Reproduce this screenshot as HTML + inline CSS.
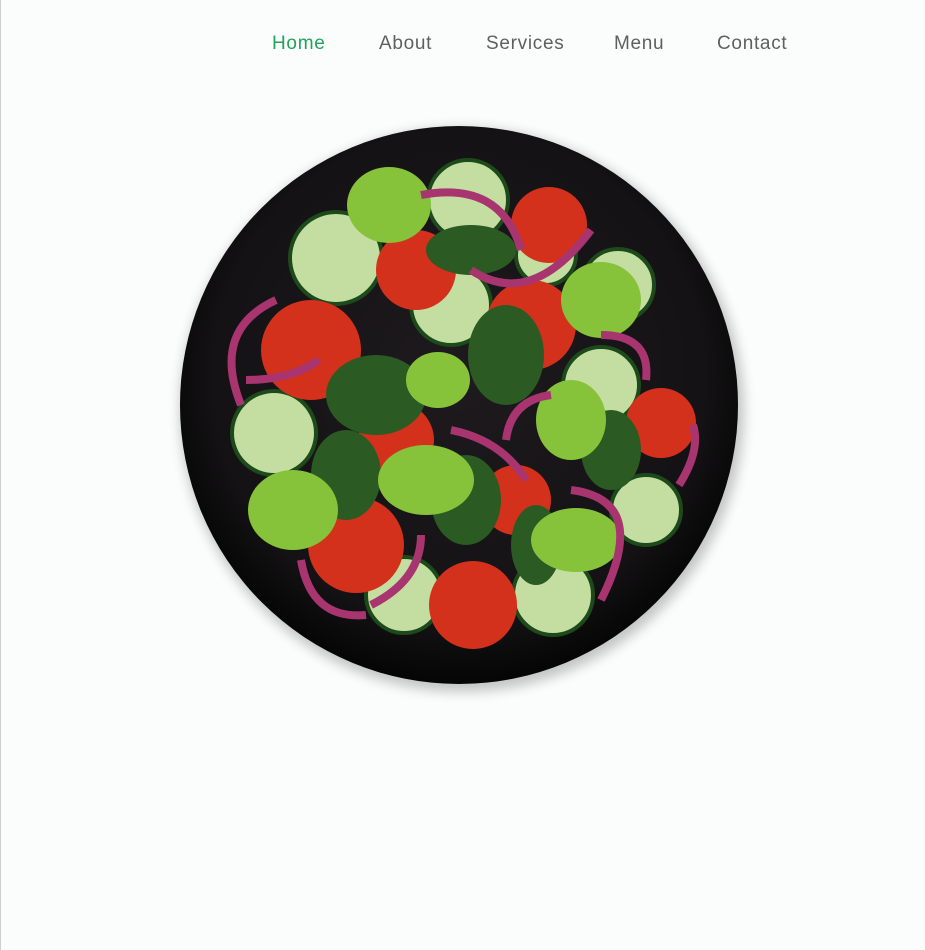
<!DOCTYPE html>
<html><head><meta charset="utf-8"><style>
html,body{margin:0;padding:0}
body{width:925px;height:950px;background:#fbfdfd;border-left:1px solid #cfcfcf;box-sizing:border-box;position:relative;overflow:hidden;font-family:"Liberation Sans",sans-serif}
nav a{position:absolute;top:33px;font-size:19px;letter-spacing:0.7px;color:#5f5f5f;text-decoration:none}
svg{position:absolute;left:0;top:0}
</style></head><body>
<nav>
<a style="left:271px;color:#1fa35a">Home</a>
<a style="left:378px">About</a>
<a style="left:485px">Services</a>
<a style="left:613px">Menu</a>
<a style="left:716px">Contact</a>
</nav>
<svg width="925" height="950">
<defs>
<radialGradient id="pl" cx="50%" cy="45%" r="55%"><stop offset="0" stop-color="#1e1a1e"/><stop offset="0.8" stop-color="#141214"/><stop offset="1" stop-color="#050505"/></radialGradient>
<filter id="sh"><feGaussianBlur stdDeviation="6"/></filter>
</defs>
<circle cx="461" cy="410" r="282" fill="#000" opacity="0.22" filter="url(#sh)"/>
<circle cx="458" cy="405" r="279" fill="url(#pl)"/>
<g stroke="#1d4a1a" stroke-width="4">
<circle cx="335" cy="258" r="46" fill="#c3dea0"/>
<circle cx="273" cy="433" r="42" fill="#c3dea0"/>
<circle cx="450" cy="305" r="40" fill="#c3dea0"/>
<circle cx="600" cy="385" r="38" fill="#c3dea0"/>
<circle cx="645" cy="510" r="35" fill="#c3dea0"/>
<circle cx="552" cy="595" r="40" fill="#c3dea0"/>
<circle cx="403" cy="595" r="38" fill="#c3dea0"/>
<circle cx="467" cy="200" r="40" fill="#c3dea0"/>
<circle cx="617" cy="285" r="36" fill="#c3dea0"/>
<circle cx="545" cy="255" r="30" fill="#c3dea0"/>
</g>
<g fill="#d4311c">
<circle cx="310" cy="350" r="50"/>
<circle cx="415" cy="270" r="40"/>
<circle cx="548" cy="225" r="38"/>
<circle cx="530" cy="325" r="45"/>
<circle cx="660" cy="423" r="35"/>
<circle cx="355" cy="545" r="48"/>
<circle cx="472" cy="605" r="44"/>
<circle cx="395" cy="440" r="38"/>
<circle cx="515" cy="500" r="35"/>
</g>
<g fill="#2b5a22">
<ellipse cx="375" cy="395" rx="50" ry="40"/>
<ellipse cx="505" cy="355" rx="38" ry="50"/>
<ellipse cx="470" cy="250" rx="45" ry="25"/>
<ellipse cx="345" cy="475" rx="35" ry="45"/>
<ellipse cx="610" cy="450" rx="30" ry="40"/>
<ellipse cx="535" cy="545" rx="25" ry="40"/>
<ellipse cx="465" cy="500" rx="35" ry="45"/>
</g>
<g fill="#86c23a">
<ellipse cx="388" cy="205" rx="42" ry="38"/>
<ellipse cx="600" cy="300" rx="40" ry="38"/>
<ellipse cx="437" cy="380" rx="32" ry="28"/>
<ellipse cx="292" cy="510" rx="45" ry="40"/>
<ellipse cx="425" cy="480" rx="48" ry="35"/>
<ellipse cx="575" cy="540" rx="45" ry="32"/>
<ellipse cx="570" cy="420" rx="35" ry="40"/>
</g>
<g fill="none" stroke="#a8356f" stroke-width="8">
<path d="M240 405 Q210 330 275 300"/>
<path d="M245 380 Q290 380 318 360"/>
<path d="M420 195 Q500 180 520 250"/>
<path d="M470 270 Q530 310 590 230"/>
<path d="M450 430 Q500 440 525 480"/>
<path d="M300 560 Q310 620 365 615"/>
<path d="M370 605 Q420 580 420 535"/>
<path d="M570 490 Q650 500 600 600"/>
<path d="M600 335 Q650 335 645 380"/>
<path d="M505 440 Q510 400 550 395"/>
<path d="M678 485 Q700 450 692 425"/>
</g>
</svg>
</body></html>
